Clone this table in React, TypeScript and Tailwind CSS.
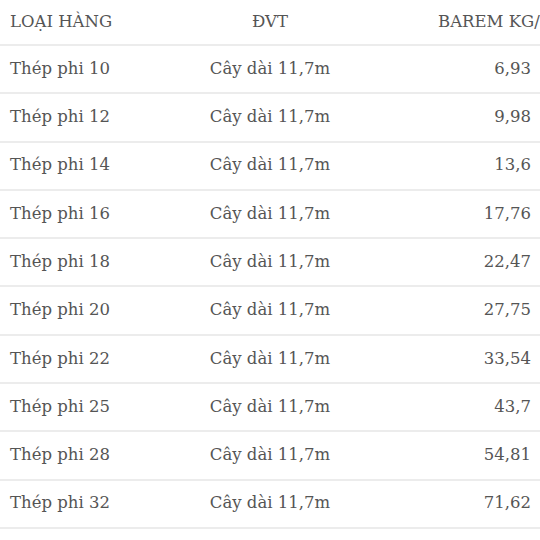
const rows: [string, string][] = [
  ["10", "6,93"],
  ["12", "9,98"],
  ["14", "13,6"],
  ["16", "17,76"],
  ["18", "22,47"],
  ["20", "27,75"],
  ["22", "33,54"],
  ["25", "43,7"],
  ["28", "54,81"],
  ["32", "71,62"],
];

export default function App() {
  return (
    <div className="h-[540px] w-[540px] overflow-hidden bg-white font-['DejaVu_Serif',serif] text-[16.5px] text-[#555]">
      <div className="flex h-[46px] items-center border-b-2 border-[#ececec]">
        <div className="w-[180px] shrink-0 pl-[10px]">LOẠI HÀNG</div>
        <div className="w-[180px] shrink-0 text-center">ĐVT</div>
        <div className="flex-1 whitespace-nowrap pl-[78px]">BAREM KG/M</div>
      </div>
      {rows.map(([phi, kg]) => (
        <div key={phi} className="flex h-[48.3px] items-center border-b-2 border-[#ececec]">
          <div className="w-[180px] shrink-0 pl-[10px]">Thép phi {phi}</div>
          <div className="w-[180px] shrink-0 text-center">Cây dài 11,7m</div>
          <div className="flex-1 pr-[9px] text-right">{kg}</div>
        </div>
      ))}
    </div>
  );
}
